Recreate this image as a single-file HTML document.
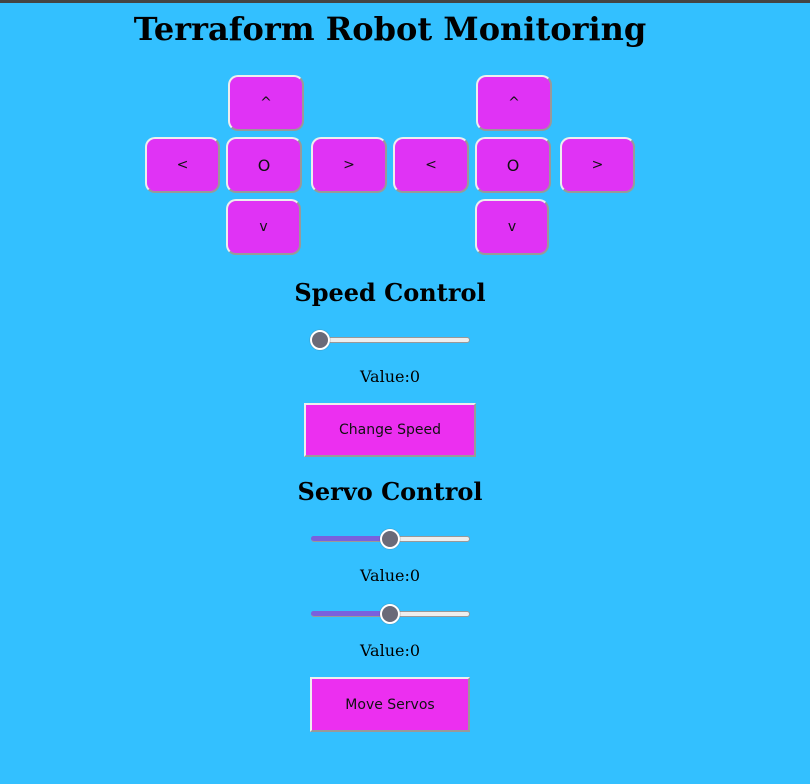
<!DOCTYPE html>
<html><head><style>
html,body{margin:0;padding:0;width:810px;height:784px;overflow:hidden;background:#33c0ff;position:relative;font-family:"DejaVu Serif","Liberation Serif",serif;}
.top{position:absolute;left:0;top:0;width:810px;height:3px;background:#444;}
.t{position:absolute;left:0;width:780px;text-align:center;font-weight:bold;color:#000;white-space:nowrap;}
.b{position:absolute;box-sizing:border-box;background:#e033f5;border:2px solid;border-color:#eee #999 #999 #eee;border-radius:10px;display:flex;align-items:center;justify-content:center;font-family:"DejaVu Sans","Liberation Sans",sans-serif;font-size:14px;color:#111;}
.r{border-radius:0;background:#ec2ff0;font-size:14px;}
.v{position:absolute;left:0;width:780px;text-align:center;font-size:16px;color:#000;}
.track{position:absolute;height:4px;background:#eee;border:1px solid #999;border-radius:3px;}
.fill{position:absolute;height:5px;background:#7a60dd;border-radius:3px;}
.th{position:absolute;width:16px;height:16px;border-radius:50%;background:#6a6a78;border:2px solid #fff;box-shadow:0 0 1px #555;}
</style></head><body>
<div class="top"></div>
<div class="t" style="top:10px;font-size:32px;">Terraform Robot Monitoring</div>

<div class="b" style="left:228px;top:75px;width:76px;height:56px">^</div>
<div class="b" style="left:145px;top:137px;width:75px;height:56px">&lt;</div>
<div class="b" style="left:226px;top:137px;width:76px;height:56px;font-size:16px">O</div>
<div class="b" style="left:311px;top:137px;width:76px;height:56px">&gt;</div>
<div class="b" style="left:226px;top:199px;width:75px;height:56px">v</div>

<div class="b" style="left:476px;top:75px;width:76px;height:56px">^</div>
<div class="b" style="left:393px;top:137px;width:76px;height:56px">&lt;</div>
<div class="b" style="left:475px;top:137px;width:76px;height:56px;font-size:16px">O</div>
<div class="b" style="left:560px;top:137px;width:75px;height:56px">&gt;</div>
<div class="b" style="left:475px;top:199px;width:74px;height:56px">v</div>

<div class="t" style="top:278px;font-size:24px;">Speed Control</div>
<div class="track" style="left:311px;top:337px;width:157px"></div>
<div class="th" style="left:310px;top:330px"></div>
<div class="v" style="top:367px">Value:0</div>
<div class="b r" style="left:304px;top:403px;width:172px;height:54px">Change Speed</div>

<div class="t" style="top:477px;font-size:24px;">Servo Control</div>
<div class="track" style="left:311px;top:536px;width:157px"></div>
<div class="fill" style="left:311px;top:536px;width:80px"></div>
<div class="th" style="left:380px;top:529px"></div>
<div class="v" style="top:566px">Value:0</div>
<div class="track" style="left:311px;top:611px;width:157px"></div>
<div class="fill" style="left:311px;top:611px;width:80px"></div>
<div class="th" style="left:380px;top:604px"></div>
<div class="v" style="top:641px">Value:0</div>
<div class="b r" style="left:310px;top:677px;width:160px;height:55px">Move Servos</div>
</body></html>
